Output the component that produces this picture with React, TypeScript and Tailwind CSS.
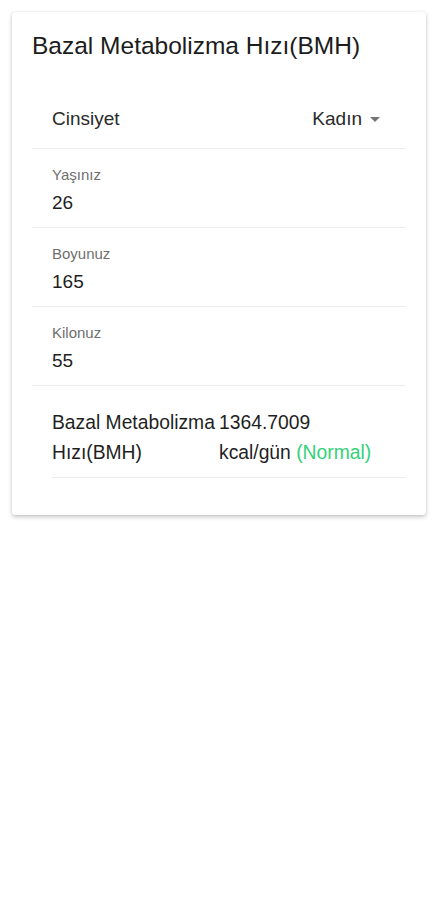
import React from "react";

const font = { fontFamily: "'Liberation Sans', Arial, sans-serif" };

function Field({ label, value }: { label: string; value: string }) {
  return (
    <div className="border-b border-[#ececec] pl-5 pt-[17px] pb-[13px]">
      <div className="text-[15px] leading-[18px] text-[#6f6f6f]">{label}</div>
      <div className="mt-2 text-[19px] leading-[22px] text-[#1f1f1f]">{value}</div>
    </div>
  );
}

export default function App() {
  return (
    <div className="min-h-[900px] bg-white p-3" style={font}>
      <div className="rounded-[3px] bg-white pt-5 pb-[37px] shadow-[0_2px_4px_rgba(0,0,0,0.22),0_0_2px_rgba(0,0,0,0.08)]">
        <h1 className="px-5 text-[24.5px] leading-[28px] font-normal text-[#1c1c1c]">
          Bazal Metabolizma Hızı(BMH)
        </h1>
        <div className="mx-5 mt-[30px]">
          <div className="flex h-[59px] items-center justify-between border-b border-[#ececec] pl-5 pr-[26px]">
            <span className="text-[19px] text-[#2a2a2a]">Cinsiyet</span>
            <span className="flex items-center gap-2 text-[19px] text-[#2a2a2a]">
              Kadın
              <svg width="10" height="5" viewBox="0 0 10 5">
                <path d="M0 0 L10 0 L5 5 Z" fill="#757575" />
              </svg>
            </span>
          </div>
          <Field label="Yaşınız" value="26" />
          <Field label="Boyunuz" value="165" />
          <Field label="Kilonuz" value="55" />
          <div className="ml-5 flex border-b border-[#ececec] pt-[22px] pb-[9px] text-[19.3px] leading-[30px] text-[#1f1f1f]">
            <div className="w-[167px] shrink-0">
              <div>Bazal Metabolizma</div>
              <div>Hızı(BMH)</div>
            </div>
            <div className="flex-1">
              <div>1364.7009</div>
              <div>
                kcal/gün <span className="text-[#33d17a]">(Normal)</span>
              </div>
            </div>
          </div>
        </div>
      </div>
    </div>
  );
}
